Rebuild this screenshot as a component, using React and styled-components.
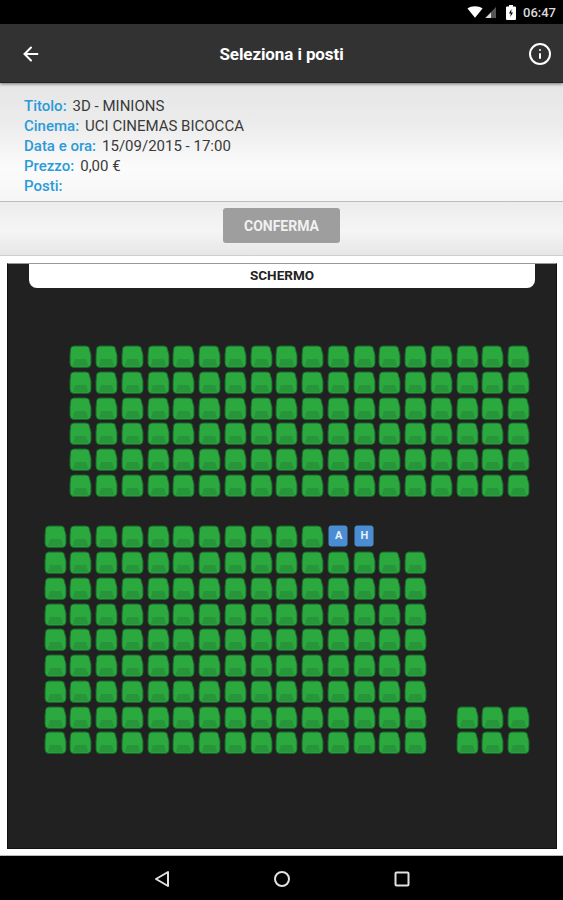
import styled, { createGlobalStyle } from 'styled-components';
import { ArrowLeft, Info } from 'lucide-react';

const GlobalStyle = createGlobalStyle`
  html, body {
    margin: 0;
    padding: 0;
    background: #fff;
  }
  * {
    box-sizing: border-box;
  }
`;

const Phone = styled.div`
  width: 563px;
  height: 900px;
  display: flex;
  flex-direction: column;
  font-family: Roboto, 'Liberation Sans', sans-serif;
  background: #fff;
  overflow: hidden;
`;

const StatusBar = styled.div`
  height: 24px;
  flex: none;
  background: #000;
  display: flex;
  align-items: center;
  justify-content: flex-end;
  padding-right: 7px;
  color: #dcdcdc;
  font-size: 13px;
  font-weight: 500;
`;

const StatusIcons = styled.div`
  display: flex;
  align-items: center;
  gap: 6px;
  margin-right: 7px;
`;

const AppBar = styled.header`
  height: 59px;
  flex: none;
  background: #333233;
  border-bottom: 1px solid #222;
  box-shadow: 0 1px 3px rgba(0, 0, 0, 0.5);
  display: flex;
  align-items: center;
  justify-content: space-between;
  padding: 1px 11px 0 20px;
  color: #fff;
  position: relative;
  z-index: 1;
`;

const AppTitle = styled.h1`
  margin: 0 7px 0 0;
  font-size: 17px;
  font-weight: 700;
  letter-spacing: -0.1px;
`;

const InfoPanel = styled.section`
  height: 119px;
  flex: none;
  padding: 13px 24px 0;
  background: linear-gradient(#e6e6e6 0%, #ececec 35%, #fbfbfb 72%, #f6f6f6 100%);
  border-bottom: 1px solid #bcbcbc;
`;

const InfoRow = styled.div`
  height: 20px;
  display: flex;
  align-items: center;
  gap: 6px;
  font-size: 15px;
  color: #3a3a3a;
`;

const InfoLabel = styled.span`
  color: #2a9bd8;
  font-weight: 500;
`;

const ActionBar = styled.div`
  height: 54px;
  flex: none;
  display: flex;
  align-items: flex-start;
  justify-content: center;
  padding-top: 6px;
  background: linear-gradient(#ececec, #f5f5f5 55%, #e6e6e6);
  border-bottom: 1px solid #cfcfcf;
`;

const ConfirmButton = styled.button`
  width: 117px;
  height: 35px;
  border: none;
  border-radius: 3px;
  background: #9e9e9e;
  color: #f1f1f1;
  font-family: inherit;
  font-size: 14px;
  font-weight: 700;
`;

const Content = styled.main`
  flex: 1;
  min-height: 0;
  padding: 7px 6px 6px 7px;
  background: #fff;
  border-bottom: 1px solid #bbb;
`;

const Hall = styled.div`
  height: 100%;
  background: #212121;
  border: 1px solid #111;
  border-top-color: #999;
  padding: 0 21px;
`;

const Screen = styled.div`
  height: 24px;
  padding-bottom: 2px;
  background: #fff;
  border-radius: 0 0 8px 8px;
  display: flex;
  align-items: center;
  justify-content: center;
  color: #222;
  font-size: 13.5px;
  font-weight: 700;
`;

const SeatGrid = styled.div`
  display: grid;
  grid-template-columns: repeat(19, 25.76px);
  grid-auto-rows: 25.76px;
  margin: 57px 0 0 14.5px;
`;

const SeatBox = styled.div`
  position: relative;
  width: 23px;
  height: 23px;
  display: flex;
  align-items: center;
  justify-content: center;
  color: #e8f0fa;
  font-size: 11px;
  font-weight: 700;
`;

const SeatShape = styled.svg`
  position: absolute;
  inset: 0;
`;

const SeatText = styled.span`
  position: relative;
  margin: -3px 0 0 1px;
`;

const NavBar = styled.nav`
  height: 44px;
  flex: none;
  background: #000;
  display: flex;
  align-items: center;
  justify-content: center;
  gap: 103px;
  padding: 1px 2px 0 0;
`;

const Seat = ({ label }) => (
  <SeatBox>
    <SeatShape width="23" height="23" viewBox="0 0 23 23">
      {label ? (
        <path d="M4.500 0.500h13a3 3 0 0 1 3 3V18.500a3 3 0 0 1-3 3h-13a3 3 0 0 1-3-3V3.500a3 3 0 0 1 3-3z" fill="#4a8dd2" />
      ) : (
        <>
          <path d="M5 1h12a3.500 3.500 0 0 1 3.500 3.500L22 10v8.500a4 4 0 0 1-4 4H5a4 4 0 0 1-4-4V10l0.500-5.500A3.500 3.500 0 0 1 5 1z" fill="#2ba83e" stroke="#17692a" strokeWidth="1" />
          <path d="M6 14h11l2 6a1.500 1.500 0 0 1-1.500 1.500h-12A1.500 1.500 0 0 1 4 20z" fill="#27963a" />
        </>
      )}
    </SeatShape>
    {label && <SeatText>{label}</SeatText>}
  </SeatBox>
);

// 19 columns, the hall has a free row between the two blocks
const buildRows = () => {
  const rows = [];
  for (let r = 0; r < 6; r++) {
    rows.push(Array.from({ length: 19 }, (_, c) => (c >= 1 ? 'seat' : null)));
  }
  rows.push(Array(19).fill(null));
  rows.push(Array.from({ length: 19 }, (_, c) => {
    if (c < 11) return 'seat';
    if (c === 11) return 'A';
    if (c === 12) return 'H';
    return null;
  }));
  for (let r = 0; r < 8; r++) {
    rows.push(Array.from({ length: 19 }, (_, c) => {
      if (c < 15) return 'seat';
      if (r >= 6 && c >= 16) return 'seat';
      return null;
    }));
  }
  return rows;
};

const App = () => {
  const rows = buildRows();
  return (
    <>
      <GlobalStyle />
      <Phone>
        <StatusBar>
          <StatusIcons>
            <svg width="16" height="13" viewBox="0 0 18 14">
              <path d="M0.500 2.500C5 -0.800 13 -0.800 17.500 2.500L9 13z" fill="#fff" />
            </svg>
            <svg width="13" height="13" viewBox="0 0 13 13" style={{ marginLeft: -5 }}>
              <path d="M12 1v11H1z" fill="#555" />
              <path d="M7 6.500V12H1.500z" fill="#ddd" />
            </svg>
            <svg width="10" height="15" viewBox="0 0 10 15" style={{ marginLeft: 3 }}>
              <path d="M3 0h4v1.500h2a1 1 0 0 1 1 1V14a1 1 0 0 1-1 1H1a1 1 0 0 1-1-1V2.500a1 1 0 0 1 1-1h2z" fill="#fff" />
              <path d="M5.500 4L3 8.500h1.800L4.300 12 7 7.500H5.200z" fill="#000" />
            </svg>
          </StatusIcons>
          06:47
        </StatusBar>

        <AppBar>
          <ArrowLeft size={22} strokeWidth={2.2} />
          <AppTitle>Seleziona i posti</AppTitle>
          <Info size={24} strokeWidth={2} />
        </AppBar>

        <InfoPanel>
          <InfoRow><InfoLabel>Titolo:</InfoLabel>3D - MINIONS</InfoRow>
          <InfoRow><InfoLabel>Cinema:</InfoLabel>UCI CINEMAS BICOCCA</InfoRow>
          <InfoRow><InfoLabel>Data e ora:</InfoLabel>15/09/2015 - 17:00</InfoRow>
          <InfoRow><InfoLabel>Prezzo:</InfoLabel>0,00 €</InfoRow>
          <InfoRow><InfoLabel>Posti:</InfoLabel></InfoRow>
        </InfoPanel>

        <ActionBar>
          <ConfirmButton>CONFERMA</ConfirmButton>
        </ActionBar>

        <Content>
          <Hall>
            <Screen>SCHERMO</Screen>
            <SeatGrid>
              {rows.flatMap((row, r) =>
                row.map((cell, c) => (
                  <div key={`${r}-${c}`}>
                    {cell && <Seat label={cell === 'seat' ? null : cell} />}
                  </div>
                ))
              )}
            </SeatGrid>
          </Hall>
        </Content>

        <NavBar>
          <svg width="18" height="18" viewBox="0 0 18 18" fill="none" stroke="#e2e2e2" strokeWidth="2" strokeLinejoin="round">
            <path d="M16 2v14L4 9z" />
          </svg>
          <svg width="18" height="18" viewBox="0 0 18 18" fill="none" stroke="#e2e2e2" strokeWidth="2">
            <circle cx="9" cy="9" r="7" />
          </svg>
          <svg width="16" height="16" viewBox="0 0 16 16" fill="none" stroke="#e2e2e2" strokeWidth="2" strokeLinejoin="round">
            <rect x="1.500" y="1.500" width="13" height="13" rx="1" />
          </svg>
        </NavBar>
      </Phone>
    </>
  );
};

export default App;
